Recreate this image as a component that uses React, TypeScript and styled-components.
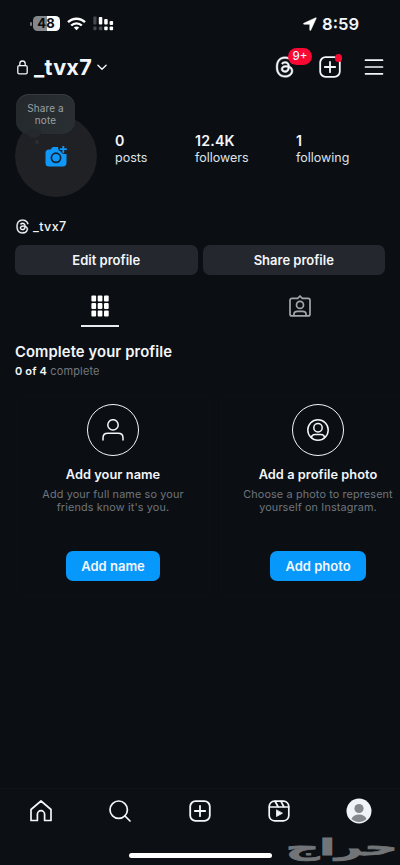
import React from "react";
import styled, { createGlobalStyle } from "styled-components";
import { FaThreads } from "react-icons/fa6";

const GlobalStyle = createGlobalStyle`
  * { box-sizing: border-box; }
  body { margin: 0; background: #0b0f14; }
  button { font: inherit; color: inherit; border: 0; padding: 0; }
  svg { display: block; flex: none; }
`;

const Screen = styled.div`
  width: 400px;
  height: 865px;
  overflow: hidden;
  display: flex;
  flex-direction: column;
  background: #0b0f14;
  color: #f3f6fa;
  font-family: Inter, "Liberation Sans", sans-serif;
`;

const StatusBar = styled.div`
  height: 47px;
  padding: 0 41px 0 30px;
  display: flex;
  align-items: center;
  justify-content: space-between;
`;

const StatusGroup = styled.div<{ $gap: number }>`
  display: flex;
  align-items: center;
  gap: ${(p) => p.$gap}px;
`;

const Battery = styled.div`
  display: flex;
  align-items: center;
  gap: 1px;
  &::before {
    content: "";
    width: 1.5px;
    height: 4px;
    border-radius: 1px;
    background: #777a7e;
  }
`;

const BatteryBody = styled.div`
  width: 27px;
  height: 15px;
  border-radius: 4.5px;
  background: linear-gradient(90deg, #85888b 51%, #fbfcfd 51%);
  color: #090c10;
  font-size: 13px;
  font-weight: 700;
  line-height: 15px;
  text-align: center;
`;

const Clock = styled.span`
  font-size: 16.6px;
  font-weight: 600;
  line-height: 20px;
`;

const Header = styled.header`
  height: 40px;
  padding: 0 16px 0 17px;
  display: flex;
  align-items: center;
  justify-content: space-between;
`;

const AccountSwitch = styled.div`
  display: flex;
  align-items: center;
`;

const AccountName = styled.h1`
  margin: 0 5px 0 6px;
  font-size: 21.6px;
  line-height: 26px;
  font-weight: 700;
  letter-spacing: 0.25px;
`;

const HeaderActions = styled.div`
  display: flex;
  align-items: center;
  gap: 23px;
`;

const IconHolder = styled.div`
  position: relative;
`;

const ThreadsIcon = styled(FaThreads)`
  stroke: currentColor;
  stroke-width: 9px;
  overflow: visible;
`;

const CountBadge = styled.span`
  position: absolute;
  left: 14px;
  top: -8px;
  width: 24px;
  height: 17px;
  border-radius: 9px;
  background: #fb0733;
  font-size: 11.5px;
  font-weight: 500;
  line-height: 17px;
  text-align: center;
`;

const DotBadge = styled.span`
  position: absolute;
  right: -1px;
  top: -2px;
  width: 7.5px;
  height: 7.5px;
  border-radius: 50%;
  background: #fb0733;
`;

const Profile = styled.section`
  height: 125px;
  padding: 28px 0 0 15px;
  display: flex;
`;

const Avatar = styled.div`
  position: relative;
  width: 82px;
  height: 82px;
  border-radius: 50%;
  background: #202125;
  display: flex;
  align-items: center;
  justify-content: center;
`;

const NoteBubble = styled.div`
  position: absolute;
  left: 1px;
  top: -21px;
  width: 59px;
  height: 40px;
  padding-top: 8px;
  border-radius: 13px;
  background: linear-gradient(110deg, #24292c, #292f32);
  box-shadow: inset 0 1px 0 #373c40;
  color: #9b9fa3;
  font-size: 10px;
  line-height: 12px;
  letter-spacing: 0.1px;
  text-align: center;
  &::before {
    content: "";
    position: absolute;
    left: 11px;
    top: 35px;
    width: 14px;
    height: 9px;
    border-radius: 0 0 8px 8px;
    background: #25292c;
  }
  &::after {
    content: "";
    position: absolute;
    left: 19px;
    top: 46px;
    width: 4px;
    height: 4px;
    border-radius: 50%;
    background: #2b2f32;
  }
`;

const Stats = styled.div`
  margin: 17px 0 0 18px;
  display: grid;
  grid-template-columns: 80px 101px 80px;
  height: 34px;
`;

const Stat = styled.div`
  display: flex;
  flex-direction: column;
  font-size: 12.5px;
  line-height: 17px;
  color: #dfe3e8;
  b {
    color: #f3f6fa;
    font-size: 14.2px;
    font-weight: 600;
    letter-spacing: 0.2px;
  }
`;

const Handle = styled.div`
  height: 26px;
  margin-top: 1px;
  padding-left: 15px;
  display: flex;
  align-items: center;
  gap: 3px;
  font-size: 12.5px;
  font-weight: 500;
  letter-spacing: 0.4px;
`;

const ProfileActions = styled.div`
  margin-top: 6px;
  padding: 0 15px;
  display: grid;
  grid-template-columns: 1fr 1fr;
  gap: 5px;
`;

const GreyButton = styled.button`
  height: 30px;
  border-radius: 7px;
  background: #24272e;
  font-size: 13px;
  font-weight: 600;
`;

const Tabs = styled.nav`
  height: 52px;
  display: grid;
  grid-template-columns: 1fr 1fr;
`;

const Tab = styled.div<{ $active?: boolean }>`
  width: 38px;
  height: 41px;
  margin: 11px auto 0;
  padding-top: 1px;
  display: flex;
  justify-content: center;
  align-items: center;
  color: ${(p) => (p.$active ? "#ffffff" : "#a3a7ac")};
  border-bottom: 2px solid ${(p) => (p.$active ? "#e8eaf1" : "transparent")};
`;

const Completion = styled.section`
  padding: 15px 15px 0;
`;

const SectionTitle = styled.h2`
  margin: 0;
  font-size: 14.8px;
  font-weight: 600;
  line-height: 20px;
  letter-spacing: 0.1px;
`;

const Progress = styled.p`
  margin: 1px 0 0;
  font-size: 11px;
  line-height: 17px;
  letter-spacing: 0.15px;
  color: #74787e;
  b {
    color: #f3f6fa;
    font-weight: 600;
  }
`;

const CardRow = styled.div`
  margin-top: 15px;
  padding-left: 16px;
  display: flex;
  gap: 11px;
`;

const Card = styled.article`
  flex: none;
  width: 194px;
  height: 201px;
  padding-top: 8px;
  border: 1px solid #0d1117;
  border-radius: 5px;
  display: flex;
  flex-direction: column;
  align-items: center;
`;

const CardIcon = styled.div`
  width: 52px;
  height: 52px;
  border: 1.5px solid #f3f6fa;
  border-radius: 50%;
  display: flex;
  align-items: center;
  justify-content: center;
`;

const CardTitle = styled.h3`
  margin: 10px 0 0;
  font-size: 12.8px;
  font-weight: 600;
  line-height: 18px;
  letter-spacing: 0.05px;
  white-space: nowrap;
`;

const CardCopy = styled.p`
  margin: 4px 0 0;
  height: 26px;
  font-size: 10.8px;
  line-height: 13px;
  letter-spacing: 0.15px;
  color: #70757b;
  text-align: center;
  white-space: pre;
`;

const BlueButton = styled.button<{ $width: number }>`
  width: ${(p) => p.$width}px;
  height: 30px;
  margin-top: 37px;
  border-radius: 7px;
  background: #0798fc;
  font-size: 13px;
  font-weight: 600;
`;

const Footer = styled.footer`
  position: relative;
  margin-top: auto;
  height: 77px;
  background: #0c1014;
  border-top: 1px solid #0f1318;
`;

const BottomNav = styled.nav`
  height: 43px;
  padding: 0 29px 0 28px;
  display: flex;
  align-items: center;
  justify-content: space-between;
`;

const NavItem = styled.div`
  width: 25px;
  display: flex;
  justify-content: center;
`;

const HomeIndicator = styled.div`
  width: 143px;
  height: 4.5px;
  margin: 21px auto 0;
  border-radius: 3px;
  background: #ffffff;
`;

const Watermark = styled.span`
  position: absolute;
  right: 2px;
  bottom: 3px;
  color: #727578;
  -webkit-text-stroke: 0.8px #727578;
  font-family: "DejaVu Sans", sans-serif;
  font-size: 22px;
  font-weight: 700;
  line-height: 28px;
  transform: scaleX(2.12);
  transform-origin: right center;
`;

const line = { fill: "none", stroke: "currentColor", strokeLinecap: "round", strokeLinejoin: "round" } as const;

const WifiIcon = () => (
  <svg width="19" height="14" viewBox="0 0 19 14" fill="none" stroke="#fff" strokeWidth="2.4">
    <path d="M1 5.2C5.8.5 13.2.5 18 5.2M4.2 8.5c3-2.9 7.6-2.9 10.6 0" />
    <path d="M9.5 13.2 6.8 10.5c1.5-1.4 3.9-1.4 5.4 0Z" fill="#fff" stroke="none" />
  </svg>
);

const SignalIcon = () => (
  <svg width="21" height="15" viewBox="0 0 21 15">
    <g fill="#fff">
      <rect x="5.8" y="1" width="3.5" height="7.5" rx="1" />
      <rect x="11.2" y="3" width="3.5" height="5.5" rx="1" />
      <rect x="16.6" y="5" width="3.5" height="4" rx="1" />
      <rect x="11.2" y="10.5" width="3.5" height="3.7" rx="1" />
      <rect x="16.6" y="10.5" width="3.5" height="3.7" rx="1" />
    </g>
    <g fill="#45494d">
      <rect x=".3" y=".5" width="3.2" height="8" rx="1" />
      <rect x=".3" y="10.5" width="3.2" height="3.7" rx="1" />
      <rect x="5.8" y="10.5" width="3.5" height="3.7" rx="1" />
    </g>
  </svg>
);

const LocationIcon = () => (
  <svg width="14" height="14" viewBox="0 0 14 14">
    <path
      d="M12.8.8.9 6.2c-.7.3-.5 1 .2 1h5.7v5.7c0 .7.7.8 1 .2L13.2 1.3c.2-.4 0-.7-.4-.5Z"
      fill="#fff"
      stroke="#fff"
      strokeWidth=".6"
    />
  </svg>
);

const LockIcon = () => (
  <svg width="11" height="15" viewBox="0 0 11 15" {...line} strokeWidth="1.3">
    <rect x=".8" y="5.7" width="9.4" height="8.2" rx="1.4" />
    <path d="M2.8 5.5V3.7a2.7 2.7 0 0 1 5.4 0v1.8" />
  </svg>
);

const ChevronIcon = () => (
  <svg width="10" height="7" viewBox="0 0 11 7" {...line} strokeWidth="1.5">
    <path d="m1 1 4.5 4.5L10 1" />
  </svg>
);

const PlusSquare = () => (
  <svg width="22" height="22" viewBox="0 0 22 22" {...line} strokeWidth="1.8">
    <rect x="1.2" y="1.2" width="19.6" height="19.6" rx="5.3" />
    <path d="M11 5.8v10.4M5.8 11h10.4" />
  </svg>
);

const MenuIcon = () => (
  <svg width="20" height="16" viewBox="0 0 20 16" {...line} strokeWidth="1.7">
    <path d="M1.5 1.2h17M1.5 8h17M1.5 14.8h17" />
  </svg>
);

const CameraIcon = () => (
  <svg width="22" height="21" viewBox="0 0 22 21">
    <path
      d="M4 3.5h1.6l1.2-1.6C7.200 1.3 7.800 1 8.500 1h4.700c-.3 2.500.8 4.100 2.700 4.600.3 1.400 1.700 2.400 3.600 2.400h2v8.800a3.700 3.700 0 0 1-3.800 3.700H4A3.500 3.500 0 0 1 .5 17V7A3.500 3.500 0 0 1 4 3.500Z"
      fill="#1098f9"
    />
    <circle cx="11" cy="11.800" r="4.600" fill="none" stroke="#152333" strokeWidth="1.700" />
    <path d="M18.300.4v5.600M15.500 3.200h5.600" stroke="#1098f9" strokeWidth="1.800" strokeLinecap="round" />
  </svg>
);

const GridIcon = () => (
  <svg width="18" height="22" viewBox="0 0 18 22" fill="currentColor">
    {[0.4, 6.7, 13].map((x) =>
      [0.5, 8, 15.5].map((y) => <rect key={`${x}-${y}`} x={x} y={y} width="4.7" height="6" rx="1" />)
    )}
  </svg>
);

const TaggedIcon = () => (
  <svg width="22" height="22" viewBox="0 0 22 22" {...line} strokeWidth="1.7">
    <path d="M3 3.300h5.700L11 1l2.300 2.300H19a2 2 0 0 1 2 2v13.600a2 2 0 0 1-2 2H3a2 2 0 0 1-2-2V5.300a2 2 0 0 1 2-2Z" />
    <circle cx="11" cy="9.900" r="3.500" />
    <path d="M4.900 20.500v-.8c0-2.100 1.500-3.300 3.500-3.300h5.200c2 0 3.500 1.200 3.500 3.300v.8" />
  </svg>
);

const PersonIcon = () => (
  <svg width="22" height="22" viewBox="0 0 22 22" {...line} strokeWidth="1.5">
    <circle cx="11" cy="5.900" r="5.200" />
    <path d="M1 21v-2c0-3 2-4.700 4.800-4.700h10.400c2.800 0 4.800 1.700 4.800 4.700v2" />
  </svg>
);

const PersonCircleIcon = () => (
  <svg width="22" height="22" viewBox="0 0 22 22" {...line} strokeWidth="1.5">
    <circle cx="11" cy="11" r="10.200" />
    <circle cx="11" cy="8.700" r="4.200" />
    <path d="M4.300 18.500c.4-2 1.800-3 3.800-3h5.800c2 0 3.400 1 3.800 3" />
  </svg>
);

const HomeIcon = () => (
  <svg width="22" height="22" viewBox="0 0 22 22" {...line} strokeWidth="1.7">
    <path d="M1 20.500V9.500L11 1l10 8.500v11h-6.400v-6.200a3.600 3.600 0 0 0-7.200 0v6.200Z" />
  </svg>
);

const SearchIcon = () => (
  <svg width="22" height="22" viewBox="0 0 22 22" {...line} strokeWidth="1.7">
    <circle cx="9.700" cy="9.700" r="8.700" />
    <path d="m16 16 5 5" />
  </svg>
);

const ReelsIcon = () => (
  <svg width="22" height="22" viewBox="0 0 22 22" {...line} strokeWidth="1.7">
    <rect x="1.200" y="1.200" width="19.600" height="19.600" rx="5.300" />
    <path d="M1.500 7h19M7.200 1.500 10.200 7M13 1.300 16 7" />
    <path d="M8.500 10.200v6.300l5.700-3.150Z" fill="currentColor" strokeWidth=".8" />
  </svg>
);

const ProfilePhoto = () => (
  <svg width="26" height="26" viewBox="0 0 26 26">
    <circle cx="13" cy="13" r="12.500" fill="#f0f3f8" />
    <circle cx="13" cy="10.500" r="4.600" fill="#85888c" />
    <path d="M5.500 21c1.200-3 3.700-4.500 7.500-4.500s6.300 1.500 7.500 4.500c-4.100 4-10.900 4-15 0Z" fill="#85888c" />
  </svg>
);

const stats = [
  ["0", "posts"],
  ["12.4K", "followers"],
  ["1", "following"],
];

const tasks = [
  {
    title: "Add your name",
    copy: "Add your full name so your\nfriends know it's you.",
    action: "Add name",
    width: 94,
    icon: <PersonIcon />,
  },
  {
    title: "Add a profile photo",
    copy: "Choose a photo to represent\nyourself on Instagram.",
    action: "Add photo",
    width: 96,
    icon: <PersonCircleIcon />,
  },
];

export default function App() {
  return (
    <>
      <GlobalStyle />
      <Screen>
        <StatusBar>
          <StatusGroup $gap={7}>
            <Battery>
              <BatteryBody>48</BatteryBody>
            </Battery>
            <WifiIcon />
            <SignalIcon />
          </StatusGroup>
          <StatusGroup $gap={5}>
            <LocationIcon />
            <Clock>8:59</Clock>
          </StatusGroup>
        </StatusBar>

        <Header>
          <AccountSwitch>
            <LockIcon />
            <AccountName>_tvx7</AccountName>
            <ChevronIcon />
          </AccountSwitch>
          <HeaderActions>
            <IconHolder>
              <ThreadsIcon size={22} />
              <CountBadge>9+</CountBadge>
            </IconHolder>
            <IconHolder>
              <PlusSquare />
              <DotBadge />
            </IconHolder>
            <MenuIcon />
          </HeaderActions>
        </Header>

        <Profile>
          <Avatar>
            <CameraIcon />
            <NoteBubble>
              Share a<br />
              note
            </NoteBubble>
          </Avatar>
          <Stats>
            {stats.map(([value, label]) => (
              <Stat key={label}>
                <b>{value}</b>
                {label}
              </Stat>
            ))}
          </Stats>
        </Profile>

        <Handle>
          <ThreadsIcon size={15} />
          _tvx7
        </Handle>

        <ProfileActions>
          <GreyButton>Edit profile</GreyButton>
          <GreyButton>Share profile</GreyButton>
        </ProfileActions>

        <Tabs>
          <Tab $active>
            <GridIcon />
          </Tab>
          <Tab>
            <TaggedIcon />
          </Tab>
        </Tabs>

        <Completion>
          <SectionTitle>Complete your profile</SectionTitle>
          <Progress>
            <b>0 of 4</b> complete
          </Progress>
        </Completion>

        <CardRow>
          {tasks.map((task) => (
            <Card key={task.title}>
              <CardIcon>{task.icon}</CardIcon>
              <CardTitle>{task.title}</CardTitle>
              <CardCopy>{task.copy}</CardCopy>
              <BlueButton $width={task.width}>{task.action}</BlueButton>
            </Card>
          ))}
        </CardRow>

        <Footer>
          <BottomNav>
            <NavItem><HomeIcon /></NavItem>
            <NavItem><SearchIcon /></NavItem>
            <NavItem><PlusSquare /></NavItem>
            <NavItem><ReelsIcon /></NavItem>
            <NavItem><ProfilePhoto /></NavItem>
          </BottomNav>
          <HomeIndicator />
          <Watermark lang="ar" dir="rtl">حراج</Watermark>
        </Footer>
      </Screen>
    </>
  );
}
